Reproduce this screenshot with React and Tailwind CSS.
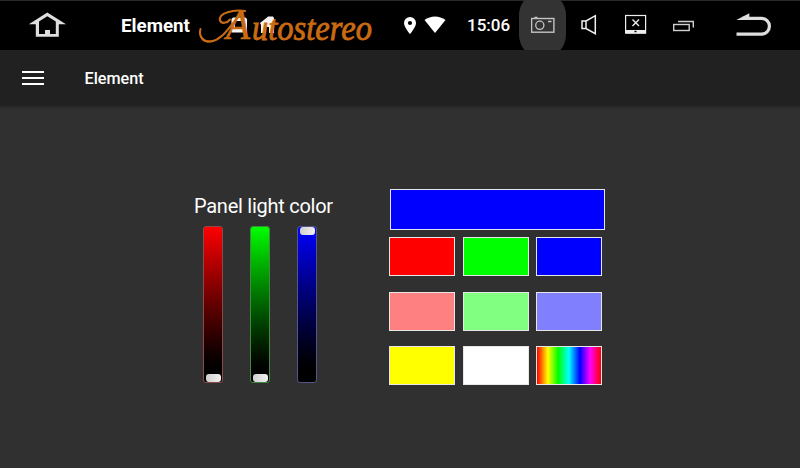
import React, { useState } from 'react';

const sliders = [
  { name: 'red', track: 'from-[#ff0000] border-[#8a4a4a]', atTop: false },
  { name: 'green', track: 'from-[#00ff00] border-[#3f8a3f]', atTop: false },
  { name: 'blue', track: 'from-[#0000ff] border-[#55558a]', atTop: true },
];

const swatches = [
  'bg-[#ff0000]',
  'bg-[#00ff00]',
  'bg-[#0000ff]',
  'bg-[#ff8080]',
  'bg-[#80ff80]',
  'bg-[#8080ff]',
  'bg-[#ffff00]',
  'bg-white',
  'bg-[linear-gradient(90deg,#ff0000,#ffff00_17%,#00ff00_33%,#00ffff_50%,#0000ff_67%,#ff00ff_83%,#ff0000)]',
];

const HomeIcon = () => (
  <svg width="38" height="50" viewBox="28 0 38 50" fill="#dedede">
    <path
      fillRule="evenodd"
      d="M47.3 12.6 66 24.2H58.8V36.8H35.8V24.2H28.8ZM47.3 16.2 39 21.6V34H45V30H50V34H55.8V21.6Z"
    />
  </svg>
);

// Brand mark with a swash capital, drawn over the notification icons
const Logo = () => (
  <svg width="178" height="50" viewBox="198 0 178 50" className="overflow-visible">
    <g fill="#f4f4f4">
      <path fillRule="evenodd" d="M233 17.5H245.5L247 19V32.5H231.5V19ZM235 21V28H243V21Z" />
      <path d="M260 23 267 17.5 268 16.5H273L274 18V33H269V27H266V33H261V25Z" />
    </g>
    <path
      d="M245 11C234 9.500 218 12.500 220 20.500C221.500 24 227 23.500 230 19.500M242 14C231 22 225 39 211 41.500C203 42.500 198.500 36 200.500 29"
      fill="none"
      stroke="#ca6b13"
      strokeWidth="2.1"
      strokeLinecap="round"
    />
    <path d="M200.500 33C201.500 39 206 41 211 40.500L214 40C210 43.500 201 44 199.500 34Z" fill="#ca6b13" />
    <g fill="#ca6b13" stroke="#ca6b13" fontFamily="'Liberation Serif', serif" fontStyle="italic">
      <text
        x="226"
        y="38.500"
        fontSize="42"
        strokeWidth="0.6"
        textLength="24"
        lengthAdjust="spacingAndGlyphs"
      >
        A
      </text>
      <text
        x="252"
        y="40"
        fontSize="35"
        strokeWidth="0.8"
        textLength="120"
        lengthAdjust="spacingAndGlyphs"
      >
        utostereo
      </text>
    </g>
  </svg>
);

const PinIcon = () => (
  <svg width="12" height="50" viewBox="404 0 12 50" fill="white">
    <path
      fillRule="evenodd"
      d="M410 17A6 6 0 0 0 404 23C404 27.300 410 34 410 34S416 27.300 416 23A6 6 0 0 0 410 17ZM410 20.900A2.100 2.100 0 1 1 410 25.100A2.100 2.100 0 1 1 410 20.900Z"
    />
  </svg>
);

const WifiIcon = () => (
  <svg width="22" height="50" viewBox="424 0 22 50" fill="white">
    <path d="M435 33 424.500 20C430.500 15.200 439.500 15.200 445.500 20Z" />
  </svg>
);

const CameraIcon = () => (
  <svg width="24" height="50" viewBox="530 0 24 50" fill="none" stroke="#c4c4c4">
    <rect x="530.600" y="18.500" width="22.300" height="13.700" strokeWidth="1.4" />
    <circle cx="538.800" cy="25.300" r="4.100" strokeWidth="1.3" />
    <path d="M533.500 17.500H536.500M547 21.500H550.500" strokeWidth="1.3" />
  </svg>
);

const SpeakerIcon = () => (
  <svg width="16" height="50" viewBox="581 0 16 50" fill="none" stroke="#f0f0f0" strokeWidth="1.5">
    <path d="M586 21H582V28.500H586L595.300 33.700V15.700L586 21V28.500" />
  </svg>
);

const ScreenOffIcon = () => (
  <svg width="22" height="50" viewBox="625 0 22 50" fill="none" stroke="#eeeeee">
    <rect x="625.600" y="15.500" width="20" height="17.500" strokeWidth="1.2" />
    <path d="M625.500 31.800H646" strokeWidth="3.6" />
    <path d="M632.500 19.500 639 26M639 19.500 632.500 26" strokeWidth="1.4" />
    <path d="M634.500 31.500H636.500" stroke="black" strokeWidth="1.4" />
  </svg>
);

const RecentsIcon = () => (
  <svg width="21" height="50" viewBox="673 0 21 50" fill="none" stroke="#cfcfcf" strokeWidth="1.4">
    <rect x="673.700" y="24.500" width="15.500" height="6" />
    <path d="M678 21.500H693.300V27.500" />
  </svg>
);

const BackIcon = () => (
  <svg width="35" height="50" viewBox="736 0 35 50">
    <path d="M742 18.400H761.500A7.900 7.900 0 0 1 761.500 34.200H736.500" fill="none" stroke="#dedede" strokeWidth="3.2" />
    <path d="M736.300 20 749.300 13.300V20Z" fill="#dedede" />
  </svg>
);

const StatusBar = () => (
  <header className="flex h-[50px] items-center border-t border-[#292929] bg-black pl-7 text-white *:shrink-0">
    <div className="-mt-px flex h-[50px] items-center *:shrink-0">
      <HomeIcon />
      <span className="ml-[55px] w-[77px] pt-0.5 text-[18.800px] font-bold">Element</span>
      <Logo />
      <div className="ml-7 flex gap-2">
        <PinIcon />
        <WifiIcon />
      </div>
      <span className="ml-[21px] w-[52px] pt-0.5 text-[17px] font-medium">15:06</span>
      <div className="relative flex h-[50px] w-[47px] justify-center overflow-hidden">
        <div className="absolute inset-x-0 -inset-y-2 rounded-[23px] bg-[#333333]" />
        <div className="relative">
          <CameraIcon />
        </div>
      </div>
      <div className="ml-[15px] flex items-center">
        <SpeakerIcon />
        <div className="ml-7">
          <ScreenOffIcon />
        </div>
        <div className="ml-[26px]">
          <RecentsIcon />
        </div>
        <div className="ml-[42px]">
          <BackIcon />
        </div>
      </div>
    </div>
  </header>
);

const ColorSlider = ({ track, atTop }) => (
  <div
    className={`flex h-[157px] w-5 flex-col items-center rounded-[3px] border bg-linear-to-b to-black ${track} ${
      atTop ? 'justify-start' : 'justify-end'
    }`}
  >
    <div className="h-2 w-[15px] rounded-[3px] bg-linear-to-r from-[#d0d0d0] to-[#f0f0f0]" />
  </div>
);

const App = () => {
  const [selected, setSelected] = useState('bg-[#0000ff]');

  return (
    <div className="h-[468px] w-[800px] overflow-hidden bg-[#303030] font-['Roboto',sans-serif] text-white">
      <StatusBar />

      {/* Toolbar */}
      <nav className="flex h-14 items-center bg-[#212121] pl-[22px] shadow-[0_1px_3px_rgba(0,0,0,0.3)]">
        <button type="button" aria-label="Menu" className="flex w-[22px] flex-col gap-1">
          <span className="h-[2px] bg-white" />
          <span className="h-[2px] bg-white" />
          <span className="h-[2px] bg-white" />
        </button>
        <h1 className="ml-[40.500px] pt-0.5 text-[16.200px] font-medium">Element</h1>
      </nav>

      <main className="flex pt-[83px] pl-[194px]">
        <section className="w-[195px] pt-[5px]">
          <h2 className="h-8 text-[20px] leading-6 tracking-[-0.260px] whitespace-nowrap">Panel light color</h2>
          <div className="flex gap-[27px] pl-[9px]">
            {sliders.map((s) => (
              <ColorSlider key={s.name} track={s.track} atTop={s.atTop} />
            ))}
          </div>
        </section>

        <section>
          <div className={`ml-px h-[41px] w-[215px] border border-[#e4e4f4] ${selected}`} />
          <div className="mt-[7px] grid w-[213px] grid-cols-[66px_66px_66px] gap-x-[7.500px] gap-y-[15.500px]">
            {swatches.map((color) => (
              <button
                key={color}
                type="button"
                onClick={() => setSelected(color)}
                className={`h-[39px] border border-[#e6e6e6] ${color}`}
              />
            ))}
          </div>
        </section>
      </main>
    </div>
  );
};

export default App;
